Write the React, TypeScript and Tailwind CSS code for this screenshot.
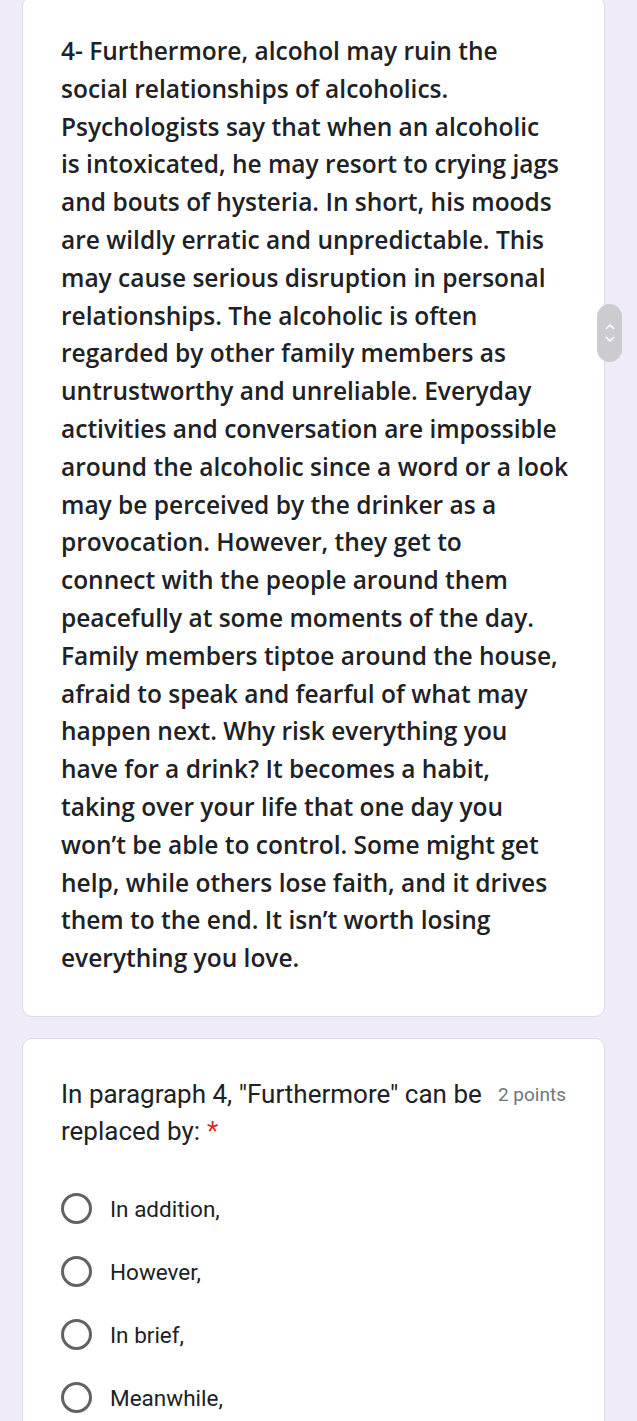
const passage = [
  '4- Furthermore, alcohol may ruin the',
  'social relationships of alcoholics.',
  'Psychologists say that when an alcoholic',
  'is intoxicated, he may resort to crying jags',
  'and bouts of hysteria. In short, his moods',
  'are wildly erratic and unpredictable. This',
  'may cause serious disruption in personal',
  'relationships. The alcoholic is often',
  'regarded by other family members as',
  'untrustworthy and unreliable. Everyday',
  'activities and conversation are impossible',
  'around the alcoholic since a word or a look',
  'may be perceived by the drinker as a',
  'provocation. However, they get to',
  'connect with the people around them',
  'peacefully at some moments of the day.',
  'Family members tiptoe around the house,',
  'afraid to speak and fearful of what may',
  'happen next. Why risk everything you',
  'have for a drink? It becomes a habit,',
  'taking over your life that one day you',
  'won\u2019t be able to control. Some might get',
  'help, while others lose faith, and it drives',
  'them to the end. It isn\u2019t worth losing',
  'everything you love.',
]

const options = ['In addition,', 'However,', 'In brief,', 'Meanwhile,']

export default function App() {
  return (
    <div className="relative min-h-[1421px] overflow-hidden bg-[#f0ebf8] pl-[22px] pr-[32px] pb-10 font-['Roboto',sans-serif]">
      {/* passage card */}
      <div className="-mt-[4px] rounded-[10px] border border-[#dadce0] bg-white px-[38px] pt-[35px] pb-[39px]">
        <p className="font-['Open_Sans',sans-serif] text-[24.5px] font-semibold leading-[37.8px] text-[#202124] whitespace-nowrap">
          {passage.map((line, i) => (
            <span key={i} className="block">{line}</span>
          ))}
        </p>
      </div>

      {/* question card */}
      <div className="mt-[21px] rounded-[10px] border border-[#dadce0] bg-white px-[38px] pt-[37px] pb-10">
        <div className="flex items-start gap-[10px]">
          <h2 className="flex-1 text-[26px] leading-[37.5px] text-[#202124]">
            <span className="block">In paragraph 4, "Furthermore" can be</span>
            <span>replaced by:</span>
            <span className="ml-[7px] text-[#d93025]">*</span>
          </h2>
          <span className="pt-[7px] text-[19px] leading-[24px] text-[#70757a] whitespace-nowrap">2 points</span>
        </div>
        <div className="mt-[42px] flex flex-col gap-[31px]">
          {options.map((opt) => (
            <label key={opt} className="flex items-center gap-[18px]">
              <span className="h-[31px] w-[31px] shrink-0 rounded-full border-[3px] border-[#5f6368]" />
              <span className="text-[22.5px] leading-[32px] text-[#202124]">{opt}</span>
            </label>
          ))}
        </div>
      </div>

      {/* scroll handle */}
      <div className="absolute left-[597px] top-[304px] flex h-[58px] w-[25px] flex-col items-center justify-center gap-[6px] rounded-full bg-[#cbcbd0]">
        <svg width="10" height="6" viewBox="0 0 10 6" fill="none" stroke="white" strokeWidth="1.5">
          <path d="M1 5l4-4 4 4" />
        </svg>
        <svg width="10" height="6" viewBox="0 0 10 6" fill="none" stroke="white" strokeWidth="1.5">
          <path d="M1 1l4 4 4-4" />
        </svg>
      </div>
    </div>
  )
}
